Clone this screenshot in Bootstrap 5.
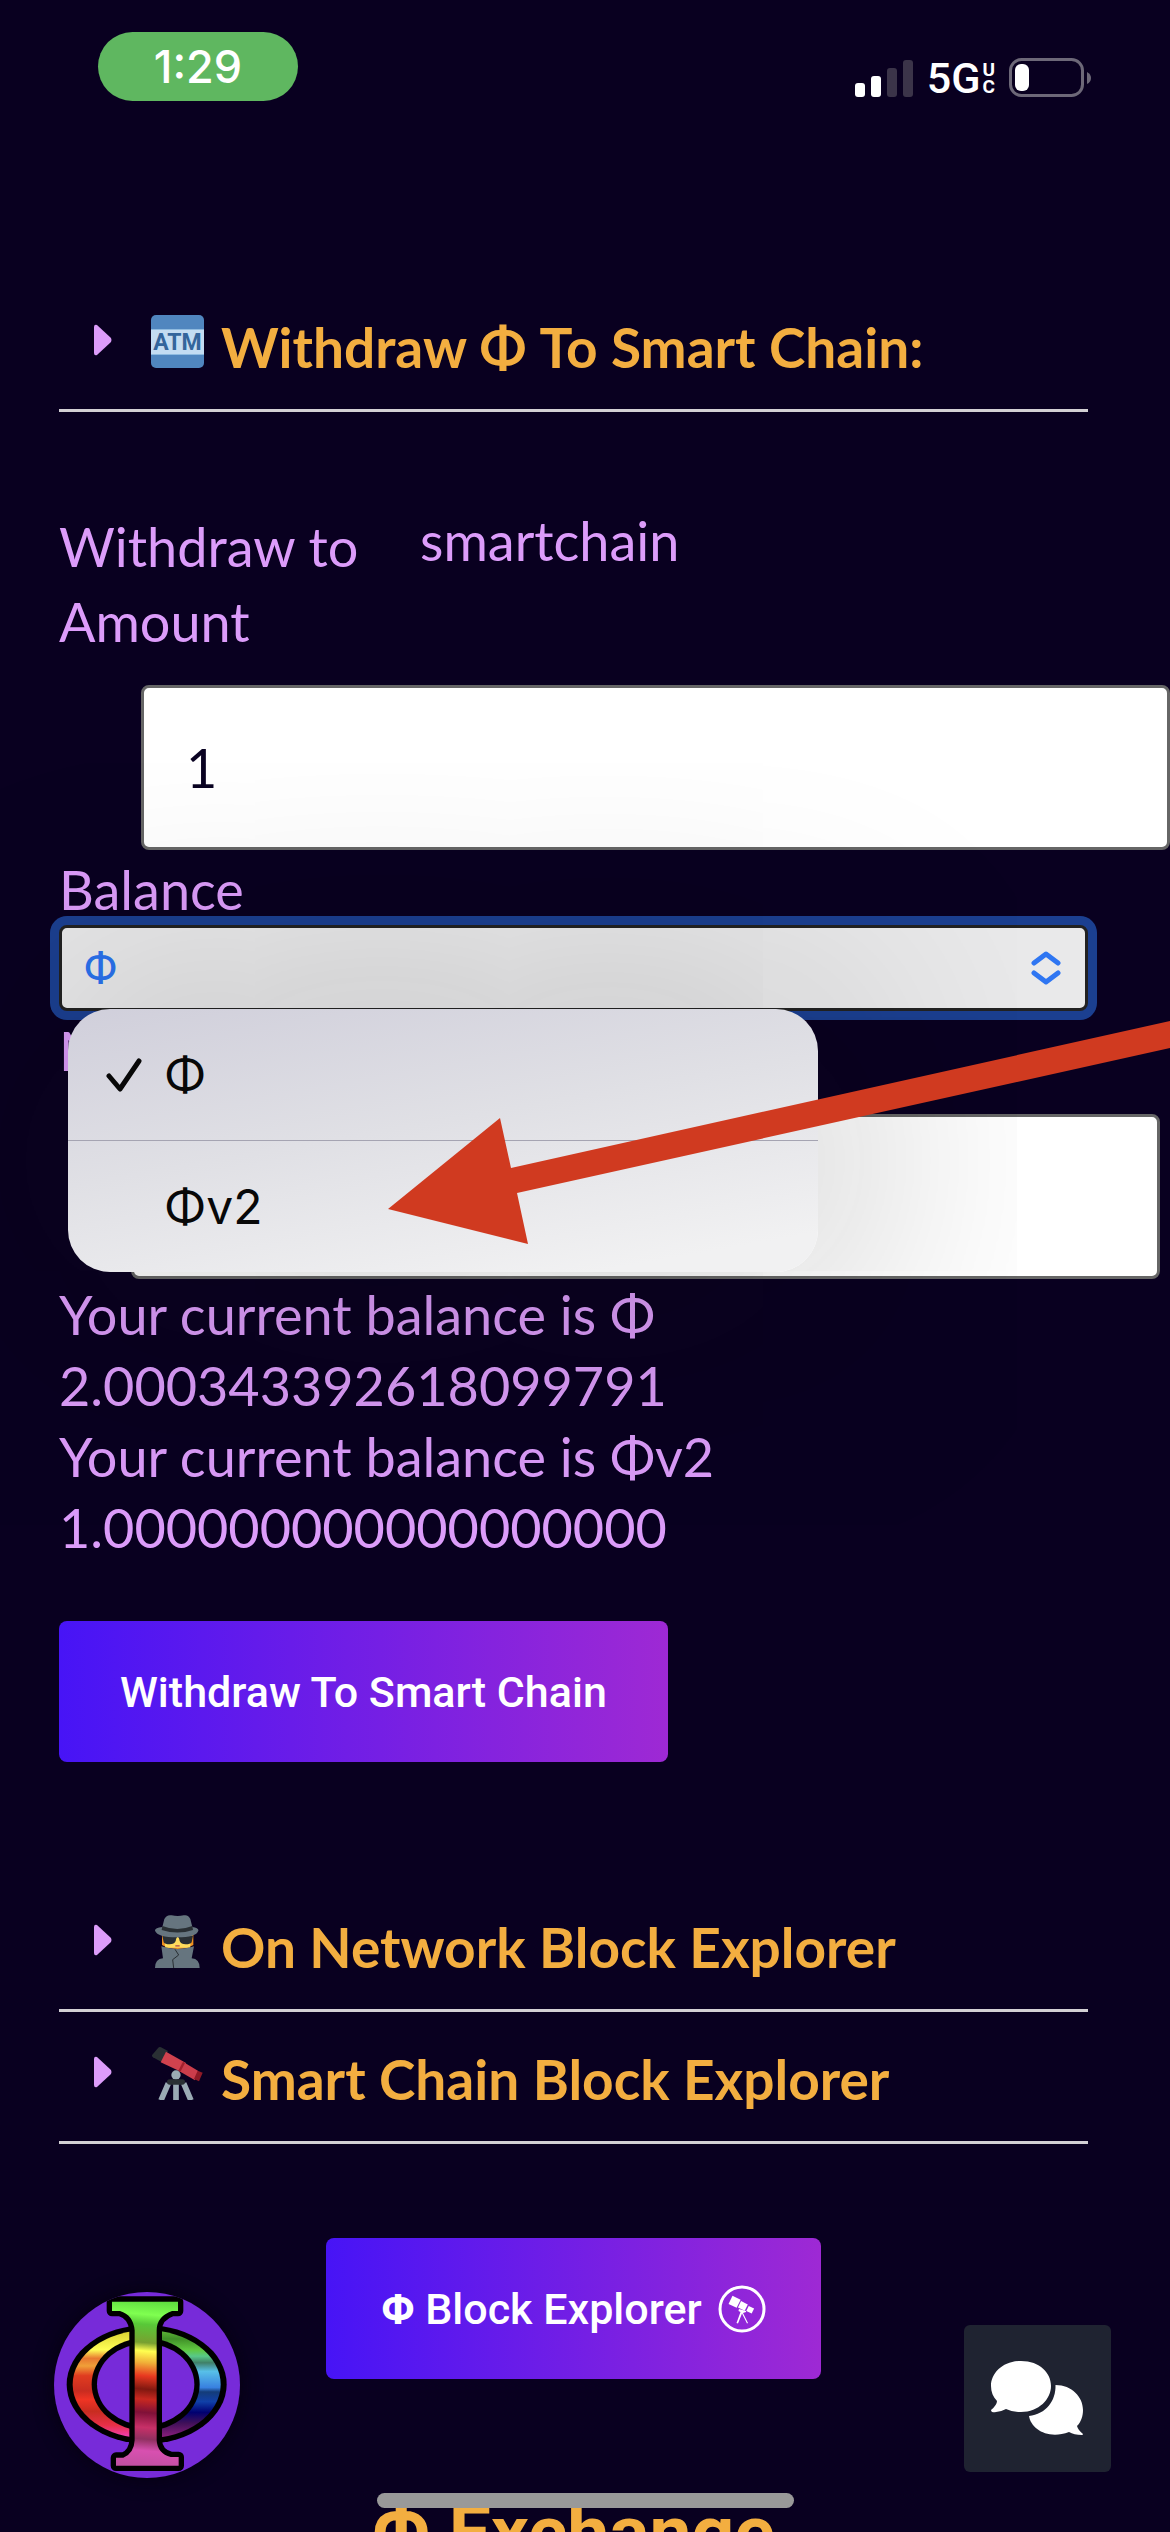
<!DOCTYPE html>
<html lang="en">
<head>
<meta charset="utf-8">
<meta name="viewport" content="width=device-width, initial-scale=1">
<title>Withdraw To Smart Chain</title>
<link href="https://cdn.jsdelivr.net/npm/bootstrap@5.3.0/dist/css/bootstrap.min.css" rel="stylesheet">
<style>
:root { --ink: #090020; --lilac: #dc9cfa; --gold: #f3ae40; --body-font: Lato, "Noto Sans", sans-serif; --ui-font: Roboto, "Liberation Sans", sans-serif; --sys-font: Inter, "Liberation Sans", sans-serif; }
body { background: var(--ink); color: var(--lilac); font-family: var(--body-font); font-size: 54px; line-height: 71px; }
.screen { height: 100vh; min-height: 2532px; }
/* status bar */
.statusbar { padding: 32px 79px 0 98px; height: 280px; font-family: var(--sys-font); color: #fff; }
.clock { width: 200px; height: 69px; border-radius: 35px; background: #5fb760; font-size: 45px; line-height: 69px; font-weight: 500; }
.signals { padding-top: 26px; gap: 14px; }
.carrier { font: 500 43px/40px var(--ui-font); gap: 2px; }
.carrier-sub { font-size: 19px; line-height: 17px; font-weight: 700; }
/* page column */
.page-col { margin: 0 82px 0 59px; }
.fold summary { list-style: none; height: 132px; border-bottom: 3px solid #d3d0d4; padding-left: 35px; color: var(--gold); font-weight: 700; }
.fold summary::-webkit-details-marker { display: none; }
.fold-caret { width: 18px; height: 32px; margin: 44px 39px 0 0; }
.fold-icon { width: 53px; height: 53px; margin: 35px 17px 0 0; }
.fold-title { font-size: 55px; line-height: 70px; margin: 32px 0 0; font-weight: 700; }
.atm-text { font: 700 23px Roboto, sans-serif; }
/* form */
.wform { padding-top: 95px; }
.wform label, .to-row dt { display: block; height: 75px; padding-top: 2px; font-weight: 400; line-height: 75px; }
.to-row dt { width: 361px; }
.to-row dd { padding-top: 2px; line-height: 64px; }
.wform .form-control { width: 100%; height: 165px; margin-top: 28px; padding: 0 42px; border: 3px solid #666; border-radius: 8px; background: #fff; color: #0a0322; font-size: 54px; }
.wform .in-amount { margin-left: 82px; }
.wform .in-memo { margin-left: 72px; }
.wform .form-select { height: 86px; border: 3px solid #222; border-radius: 8px; background: #e9e9ea; color: #2b72ee; font: 400 46px/80px var(--ui-font); padding: 0 22px; box-shadow: 0 0 0 9px #1b3f90; }
.select-chev { right: 27px; top: 26px; width: 30px; height: 34px; pointer-events: none; }
.pick-menu { left: 9px; top: 84px; width: 750px; border-radius: 42px; background: linear-gradient(170deg, #d0cfdb, #e0e0e5 45%, #f1f1f2 90%); box-shadow: 0 20px 260px 30px rgba(12, 12, 12, .24); z-index: 3; overflow: visible; }
.pick-menu button { width: 100%; height: 131px; border: 0; background: none; color: #080808; font: 400 48px/131px var(--sys-font); padding: 0 38px; text-align: left; }
.pick-menu li + li { border-top: 1px solid #a5a4b2; }
.tick { width: 36px; height: 36px; margin-right: 22px; }
.pointer-arrow { left: 329px; top: 609px; width: 782px; height: 230px; z-index: 4; pointer-events: none; }
.btn-grad { height: 141px; border: 0; border-radius: 8px; color: #fff; background: linear-gradient(90deg, #4714f6, #9e29d4); font: 500 43px/56px var(--ui-font); padding: 0 61px; }
.act-withdraw { margin-top: 58px; margin-bottom: 118px; }
.act-explore { margin-top: 94px; padding: 0 55px; }
.scope { width: 48px; height: 48px; margin-left: 16px; }
.next-head { margin: 116px 0 0; font: 700 75px/75px var(--ui-font); color: var(--gold); }
/* floating controls */
.logo-fab { left: 54px; bottom: 54px; width: 186px; height: 186px; border: 0; padding: 0; border-radius: 50%; background: #772bd9; overflow: hidden; box-shadow: 0 0 20px #05000f; }
.chat-fab { right: 59px; bottom: 60px; width: 147px; height: 147px; border: 0; padding: 0; border-radius: 6px; background: #1f2331; }
.home-bar { left: 50%; bottom: 24px; width: 417px; height: 15px; margin-left: -208px; border-radius: 8px; background: #999; }
</style>
<script src="https://cdn.jsdelivr.net/npm/bootstrap@5.3.0/dist/js/bootstrap.bundle.min.js"></script>
</head>
<body>
<div class="screen position-relative overflow-hidden">
  <header class="statusbar d-flex justify-content-between align-items-start">
    <div class="clock text-center">1:29</div>
    <div class="signals d-flex align-items-center">
      <svg width="58" height="38" viewBox="0 0 58 38" aria-hidden="true"><rect y="24" width="10" height="14" rx="3" fill="#fff"/><rect x="16" y="17" width="10" height="21" rx="3" fill="#fff"/><rect x="32" y="9" width="10" height="29" rx="3" fill="#3b3449"/><rect x="48" y="1" width="10" height="37" rx="3" fill="#3b3449"/></svg>
      <div class="carrier d-flex align-items-center"><span>5G</span><span class="carrier-sub d-flex flex-column"><span>U</span><span>C</span></span></div>
      <svg width="82" height="40" viewBox="0 0 82 40" aria-hidden="true"><rect x="1.5" y="1.5" width="72" height="36" rx="11" fill="none" stroke="#6d6878" stroke-width="3"/><rect x="6" y="6" width="14" height="27" rx="6" fill="#fff"/><path d="M78 14q4 2 4 6t-4 6z" fill="#6d6878"/></svg>
    </div>
  </header>

  <main class="page-col">
    <details class="fold">
      <summary class="d-flex align-items-start">
        <svg class="fold-caret" viewBox="0 0 18 32" aria-hidden="true"><path d="M0 3Q0 0 3 1L17 14Q18 16 17 18L3 31Q0 32 0 29z" fill="#dc9cfa"/></svg>
        <svg class="fold-icon" viewBox="0 0 53 53" aria-hidden="true"><rect width="53" height="53" rx="5" fill="#5086bf"/><rect y="14" width="53" height="26" fill="#8fbbe0"/><rect y="15" width="53" height="24" fill="#c3dcf2"/><text class="atm-text" x="26.5" y="35" text-anchor="middle" fill="#33659c">ATM</text></svg>
        <h2 class="fold-title">Withdraw Φ To Smart Chain:</h2>
      </summary>
    </details>

    <form class="wform position-relative">
      <dl class="to-row d-flex align-items-start mb-0"><dt>Withdraw to</dt><dd class="mb-0">smartchain</dd></dl>
      <label for="amount">Amount</label>
      <input class="form-control in-amount" id="amount" type="text" inputmode="decimal" value="1">
      <label for="balance">Balance</label>
      <div class="position-relative">
        <select class="form-select" id="balance"><option selected>Φ</option><option>Φv2</option></select>
        <svg class="select-chev position-absolute" viewBox="0 0 30 34" fill="none" stroke="#2f76f2" stroke-width="5" stroke-linecap="round" stroke-linejoin="round" aria-hidden="true"><path d="M3 12L15 3L27 12M3 22L15 31L27 22"/></svg>
        <ul class="pick-menu position-absolute list-unstyled mb-0">
          <li><button type="button" class="d-flex align-items-center"><svg class="tick" viewBox="0 0 36 36" fill="none" stroke="#080808" stroke-width="5" stroke-linecap="round" stroke-linejoin="round" aria-hidden="true"><path d="M3 19L14 32L33 4"/></svg>Φ</button></li>
          <li><button type="button" class="d-flex align-items-center"><span class="tick"></span>Φv2</button></li>
        </ul>
      </div>
      <label for="memo">Memo</label>
      <input class="form-control in-memo" id="memo" type="text">
      <p class="mb-0">Your current balance is Φ<br>2.000343392618099791<br>Your current balance is Φv2<br>1.000000000000000000</p>
      <svg class="pointer-arrow position-absolute" viewBox="0 0 782 230" aria-hidden="true"><path d="M0 286L112 195L123 245L782 98V125L129 270L140 321z" transform="translate(0 -98)" fill="#d03a20"/></svg>
      <button type="button" class="btn btn-grad act-withdraw">Withdraw To Smart Chain</button>
    </form>

    <details class="fold">
      <summary class="d-flex align-items-start">
        <svg class="fold-caret" viewBox="0 0 18 32" aria-hidden="true"><path d="M0 3Q0 0 3 1L17 14Q18 16 17 18L3 31Q0 32 0 29z" fill="#dc9cfa"/></svg>
        <svg class="fold-icon" viewBox="0 0 159 159" aria-hidden="true"><path d="M33 60h94v30q-20 12-47 12T33 90z" fill="#f19020"/><path d="M38 60h84l-5 38H43z" fill="#ffdc5d"/><path d="M73 90h13v5H73z" fill="#c1694f"/><path d="M34 62h92l-4 20q-4 6-18 6-14 0-18-10-2-12-6-12t-6 12q-4 10-18 10t-18-6z" fill="#292f33"/><path d="M31 94q22 8 49 8t49-8l-7 36q24 2 24 29H12q0-27 24-29z" fill="#66757f"/><path d="M72 103l11 17-18 14 3 25" fill="none" stroke="#292f33" stroke-width="3"/><path d="M12 47q-1-8 22-11l6-24Q47-2 62 1q18 4 36 0 14-3 20 11l6 24q20 3 18 11-6 20-64 20T12 47z" fill="#66757f"/><path d="M34 33q45 18 90 0l2 12q-46 15-94 0z" fill="#292f33"/></svg>
        <h2 class="fold-title">On Network Block Explorer</h2>
      </summary>
    </details>
    <details class="fold">
      <summary class="d-flex align-items-start">
        <svg class="fold-caret" viewBox="0 0 18 32" aria-hidden="true"><path d="M0 3Q0 0 3 1L17 14Q18 16 17 18L3 31Q0 32 0 29z" fill="#dc9cfa"/></svg>
        <svg class="fold-icon" viewBox="0 0 159 159" aria-hidden="true"><path d="M22 2q3-3 8-1l21 11-18 34-27-15q-5-3-2-8z" fill="#292f33"/><path d="M45 14l60 34-12 28-64-30z" fill="#d0424e"/><path d="M92 42l50 30-10 28-48-28z" fill="#cb3d4b"/><path d="M96 44l6 4-14 27-6-4z" fill="#a0202c"/><path d="M140 71l15 6-11 26-15-7z" fill="#8f1a26"/><g stroke="#9aaab4" stroke-width="17"><path d="M52 109L30 160M75 109v50M98 109l22 51"/></g><circle cx="75" cy="84" r="14" fill="#9aaab4"/><rect x="48" y="97" width="54" height="16" rx="8" fill="#292f33"/></svg>
        <h2 class="fold-title">Smart Chain Block Explorer</h2>
      </summary>
    </details>

    <div class="text-center">
      <button type="button" class="btn btn-grad act-explore"><span class="d-flex align-items-center"><span><b>Φ</b> Block Explorer</span><svg class="scope" viewBox="0 0 48 48" aria-hidden="true"><circle cx="24" cy="24" r="22" fill="none" stroke="#fff" stroke-width="3"/><g fill="#fff"><g transform="rotate(26 24 21)"><rect x="11" y="16" width="9" height="9"/><rect x="21" y="17" width="7.500" height="7"/><rect x="30" y="18" width="6" height="5.500"/></g><path d="M21 24l7 2v1l-3 1 5 10-1 .5-5-10-4 10-1.500-.5 4-11-2-1z"/></g></svg></span></button>
      <h2 class="next-head">Φ Exchange</h2>
    </div>
  </main>

  <button type="button" class="logo-fab position-absolute" aria-label="Home">
    <svg class="d-block w-100 h-100" viewBox="42 36 558 556" aria-hidden="true">
      <defs>
        <linearGradient id="arcL" x1="0" y1="0" x2="0" y2="1"><stop offset="0" stop-color="#d8d030"/><stop offset=".18" stop-color="#ffff55"/><stop offset=".26" stop-color="#e87830"/><stop offset=".33" stop-color="#f0a038"/><stop offset=".42" stop-color="#e03c20"/><stop offset=".56" stop-color="#c82c20"/><stop offset=".64" stop-color="#f03424"/><stop offset=".75" stop-color="#c82c20"/><stop offset=".88" stop-color="#e83048"/><stop offset="1" stop-color="#f040c0"/></linearGradient>
        <linearGradient id="arcR" x1="0" y1="0" x2="0" y2="1"><stop offset="0" stop-color="#60b838"/><stop offset=".08" stop-color="#409028"/><stop offset=".18" stop-color="#60c840"/><stop offset=".24" stop-color="#58c888"/><stop offset=".3" stop-color="#408068"/><stop offset=".38" stop-color="#58c0e8"/><stop offset=".53" stop-color="#3880e0"/><stop offset=".57" stop-color="#143c78"/><stop offset=".66" stop-color="#1040a8"/><stop offset=".76" stop-color="#000070"/><stop offset=".86" stop-color="#401058"/><stop offset="1" stop-color="#902080"/></linearGradient>
        <linearGradient id="stem" gradientUnits="userSpaceOnUse" x1="340" y1="64" x2="300" y2="560"><stop offset="0" stop-color="#60e040"/><stop offset=".08" stop-color="#80ff50"/><stop offset=".14" stop-color="#58c838"/><stop offset=".25" stop-color="#78a030"/><stop offset=".3" stop-color="#ffff50"/><stop offset=".37" stop-color="#f0b038"/><stop offset=".45" stop-color="#e83820"/><stop offset=".53" stop-color="#801810"/><stop offset=".59" stop-color="#c82820"/><stop offset=".67" stop-color="#801038"/><stop offset=".76" stop-color="#c83068"/><stop offset=".83" stop-color="#903060"/><stop offset=".9" stop-color="#d850b0"/><stop offset="1" stop-color="#c050a0"/></linearGradient>
      </defs>
      <ellipse cx="320" cy="312" rx="240" ry="178" fill="#000"/>
      <path d="M320 150A222 162 0 0 0 320 474z" fill="url(#arcL)"/>
      <path d="M320 150A222 162 0 0 1 320 474z" fill="url(#arcR)"/>
      <ellipse cx="317" cy="312" rx="162" ry="139" fill="#000"/>
      <ellipse cx="317" cy="312" rx="146" ry="122" fill="#772bd9"/>
      <path d="M216 64H414V92H396Q350 108 350 150V480Q352 520 392 530H416V556H228V532H250Q282 520 284 480V150Q280 104 240 92H216z" fill="url(#stem)" stroke="#000" stroke-width="32" stroke-linejoin="round" paint-order="stroke"/>
    </svg>
  </button>
  <button type="button" class="chat-fab position-absolute" aria-label="Chat">
    <svg class="d-block w-100 h-100" viewBox="0 0 147 147" fill="#fff" aria-hidden="true"><path d="M57 36C76 36 87 48 87 61S75 87 57 87Q48 87 42 84Q35 88 28 87Q27 86 27 85Q33 80 33 76C29 72 27 67 27 61C27 48 39 36 57 36z"/><path d="M91.500 60C108 60 119 72 119 85C119 91 117 97 113 101Q114 105 119 109Q119 110 118 110Q110 110 105 107C84 115 67 104 65 91C82 89 92 76 91.500 60z"/></svg>
  </button>
  <div class="home-bar position-absolute"></div>
</div>
</body>
</html>
